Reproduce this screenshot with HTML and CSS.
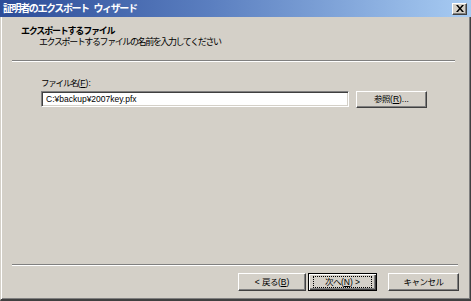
FILE: index.html
```html
<!DOCTYPE html>
<html lang="ja">
<head>
<meta charset="utf-8">
<link rel="stylesheet" href="styles.css">
</head>
<body>
<div class="window">
  <div class="titlebar">
    <span class="title"><span class="j">証明者のエクスポート</span> <span class="j">ウィザード</span></span>
    <span class="close"><svg width="8" height="7" viewBox="0 0 8 7"><path d="M0 0h2l2 2.5L6 0h2L5 3.5 8 7H6L4 4.5 2 7H0l3-3.5z" fill="#000"/></svg></span>
  </div>
  <div class="frame">
    <div class="header">
      <div class="h-title"><span class="j">エクスポートするファイル</span></div>
      <div class="h-sub"><span class="j">エクスポートするファイルの名前を入力してください</span></div>
    </div>
    <div class="sep top"></div>
    <div class="content">
      <div class="label"><span class="j">ファイル名</span>(<u>F</u>):</div>
      <div class="row">
        <div class="input">C:¥backup¥2007key.pfx</div>
        <div class="btn browse"><span class="j">参照</span>(<u>R</u>)...</div>
      </div>
    </div>
    <div class="sep bottom"></div>
    <div class="footer">
      <div class="btn">&lt; <span class="j">戻る</span>(<u>B</u>)</div>
      <div class="btn default"><span class="focus"><span class="j">次へ</span>(<u>N</u>) &gt;</span></div>
      <div class="btn cancel"><span class="j">キャンセル</span></div>
    </div>
  </div>
</div>
</body>
</html>
```

FILE: styles.css
```css
* { box-sizing: border-box; }
html, body { margin: 0; padding: 0; }
body {
  width: 471px;
  height: 301px;
  background: #d4d0c8;
  font-family: "Liberation Sans", "Noto Sans CJK JP", sans-serif;
  font-size: 9px;
  color: #000;
  overflow: hidden;
}
.j { letter-spacing: -1.2px; }
.window {
  width: 471px;
  height: 301px;
  display: flex;
  flex-direction: column;
}
.titlebar {
  height: 17px;
  flex: none;
  background: linear-gradient(to right, #2c4c98, #5b7fc0 45%, #a8ccf3);
  display: flex;
  align-items: center;
  justify-content: space-between;
  padding: 0 4px 0 3px;
}
.title {
  color: #fff;
  font-weight: bold;
  font-size: 10px;
  line-height: 12px;
  word-spacing: 2px;
}
.title .j { letter-spacing: -1.4px; }
.close {
  width: 15px;
  height: 12px;
  background: #d4d0c8;
  border: 1px solid;
  border-color: #fff #404040 #404040 #fff;
  box-shadow: inset -1px -1px #808080;
  display: flex;
  align-items: center;
  justify-content: center;
}
.frame {
  flex: 1;
  display: flex;
  flex-direction: column;
  border-left: 1px solid #d4d0c8;
  border-right: 1px solid #404040;
  border-bottom: 2px solid #404040;
  box-shadow: inset 1px 0 #fff, inset -1px -1px #808080;
}
.header {
  height: 43px;
  padding: 9px 0 0 20px;
}
.h-title {
  font-weight: bold;
  line-height: 11px;
}
.h-sub {
  padding-left: 18px;
  line-height: 11px;
}
.h-sub .j { letter-spacing: -1.4px; }
.sep {
  height: 2px;
  border-top: 1px solid #808080;
  border-bottom: 1px solid #fff;
}
.sep.top { margin: 0 15px 0 11px; }
.sep.bottom { margin: 0 12px 0 11px; }
.content {
  flex: 1;
  padding: 15px 0 0 40px;
}
.label {
  line-height: 12px;
  margin-bottom: 2px;
  font-size: 8.5px;
}
.row {
  display: flex;
  align-items: flex-start;
  gap: 7px;
}
.input {
  width: 308px;
  height: 16px;
  background: #fff;
  border: 1px solid;
  border-color: #808080 #fff #fff #808080;
  box-shadow: inset 1px 1px #404040, inset -1px -1px #d4d0c8;
  padding: 2px 0 0 4px;
  font-size: 8.5px;
  line-height: 11px;
}
.btn {
  width: 68px;
  height: 18px;
  background: #d4d0c8;
  border: 1px solid;
  border-color: #fff #404040 #404040 #fff;
  box-shadow: inset -1px -1px #808080;
  display: flex;
  align-items: center;
  justify-content: center;
  font-size: 8.5px;
  line-height: 11px;
  white-space: pre;
}
.btn .j { letter-spacing: -0.5px; }
.btn.browse { width: 71px; height: 17px; }
.footer {
  height: 33px;
  display: flex;
  justify-content: flex-end;
  align-items: flex-start;
  padding: 7px 11px 0 0;
  gap: 2px;
}
.btn.default {
  width: 69px;
  border: 1px solid #000;
  box-shadow: inset 1px 1px #fff, inset -1px -1px #404040, inset -2px -2px #808080;
}
.focus {
  border: 1px dotted #000;
  width: 59px;
  height: 12px;
  display: flex;
  align-items: center;
  justify-content: center;
}
.btn.cancel { width: 71px; margin-left: 9px; }
u { text-decoration: underline; }
```
